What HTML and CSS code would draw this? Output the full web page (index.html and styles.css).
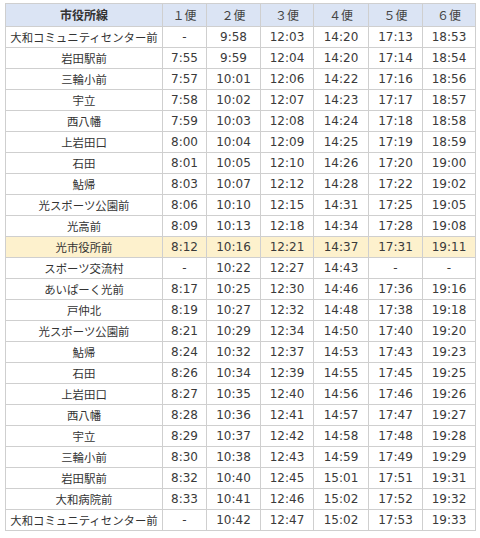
FILE: index.html
```html
<!DOCTYPE html>
<html lang="ja">
<head>
<meta charset="utf-8">
<link rel="stylesheet" href="styles.css">
</head>
<body>
<table class="timetable">
<colgroup>
<col class="c-stop"><col class="c1"><col class="c2"><col class="c3"><col class="c4"><col class="c5"><col class="c6">
</colgroup>
<thead>
<tr><th class="line">市役所線</th><th>１便</th><th>２便</th><th>３便</th><th>４便</th><th>５便</th><th>６便</th></tr>
</thead>
<tbody>
<tr><td class="stop">大和コミュニティセンター前</td><td>-</td><td>9:58</td><td>12:03</td><td>14:20</td><td>17:13</td><td>18:53</td></tr>
<tr><td class="stop">岩田駅前</td><td>7:55</td><td>9:59</td><td>12:04</td><td>14:20</td><td>17:14</td><td>18:54</td></tr>
<tr><td class="stop">三輪小前</td><td>7:57</td><td>10:01</td><td>12:06</td><td>14:22</td><td>17:16</td><td>18:56</td></tr>
<tr><td class="stop">宇立</td><td>7:58</td><td>10:02</td><td>12:07</td><td>14:23</td><td>17:17</td><td>18:57</td></tr>
<tr><td class="stop">西八幡</td><td>7:59</td><td>10:03</td><td>12:08</td><td>14:24</td><td>17:18</td><td>18:58</td></tr>
<tr><td class="stop">上岩田口</td><td>8:00</td><td>10:04</td><td>12:09</td><td>14:25</td><td>17:19</td><td>18:59</td></tr>
<tr><td class="stop">石田</td><td>8:01</td><td>10:05</td><td>12:10</td><td>14:26</td><td>17:20</td><td>19:00</td></tr>
<tr><td class="stop">鮎帰</td><td>8:03</td><td>10:07</td><td>12:12</td><td>14:28</td><td>17:22</td><td>19:02</td></tr>
<tr><td class="stop">光スポーツ公園前</td><td>8:06</td><td>10:10</td><td>12:15</td><td>14:31</td><td>17:25</td><td>19:05</td></tr>
<tr><td class="stop">光高前</td><td>8:09</td><td>10:13</td><td>12:18</td><td>14:34</td><td>17:28</td><td>19:08</td></tr>
<tr class="hl"><td class="stop">光市役所前</td><td>8:12</td><td>10:16</td><td>12:21</td><td>14:37</td><td>17:31</td><td>19:11</td></tr>
<tr><td class="stop">スポーツ交流村</td><td>-</td><td>10:22</td><td>12:27</td><td>14:43</td><td>-</td><td>-</td></tr>
<tr><td class="stop">あいぱーく光前</td><td>8:17</td><td>10:25</td><td>12:30</td><td>14:46</td><td>17:36</td><td>19:16</td></tr>
<tr><td class="stop">戸仲北</td><td>8:19</td><td>10:27</td><td>12:32</td><td>14:48</td><td>17:38</td><td>19:18</td></tr>
<tr><td class="stop">光スポーツ公園前</td><td>8:21</td><td>10:29</td><td>12:34</td><td>14:50</td><td>17:40</td><td>19:20</td></tr>
<tr><td class="stop">鮎帰</td><td>8:24</td><td>10:32</td><td>12:37</td><td>14:53</td><td>17:43</td><td>19:23</td></tr>
<tr><td class="stop">石田</td><td>8:26</td><td>10:34</td><td>12:39</td><td>14:55</td><td>17:45</td><td>19:25</td></tr>
<tr><td class="stop">上岩田口</td><td>8:27</td><td>10:35</td><td>12:40</td><td>14:56</td><td>17:46</td><td>19:26</td></tr>
<tr><td class="stop">西八幡</td><td>8:28</td><td>10:36</td><td>12:41</td><td>14:57</td><td>17:47</td><td>19:27</td></tr>
<tr><td class="stop">宇立</td><td>8:29</td><td>10:37</td><td>12:42</td><td>14:58</td><td>17:48</td><td>19:28</td></tr>
<tr><td class="stop">三輪小前</td><td>8:30</td><td>10:38</td><td>12:43</td><td>14:59</td><td>17:49</td><td>19:29</td></tr>
<tr><td class="stop">岩田駅前</td><td>8:32</td><td>10:40</td><td>12:45</td><td>15:01</td><td>17:51</td><td>19:31</td></tr>
<tr><td class="stop">大和病院前</td><td>8:33</td><td>10:41</td><td>12:46</td><td>15:02</td><td>17:52</td><td>19:32</td></tr>
<tr><td class="stop">大和コミュニティセンター前</td><td>-</td><td>10:42</td><td>12:47</td><td>15:02</td><td>17:53</td><td>19:33</td></tr>
</tbody>
</table>
</body>
</html>
```

FILE: styles.css
```css
html, body {
  margin: 0;
  padding: 0;
  background: #ffffff;
}
body {
  padding: 3px 5px;
}
.timetable {
  border-collapse: collapse;
  table-layout: fixed;
  width: 470px;
  font-family: "DejaVu Sans", "Noto Sans CJK JP", sans-serif;
  font-size: 12px;
  color: #3a3a3a;
}
.c-stop { width: 157px; }
.c1 { width: 44px; }
.c2 { width: 54px; }
.c3 { width: 53px; }
.c4 { width: 55px; }
.c5 { width: 54px; }
.c6 { width: 53px; }
.timetable th,
.timetable td {
  border: 1px solid #cfcfcf;
  padding: 0;
  text-align: center;
  white-space: nowrap;
  overflow: hidden;
}
.timetable th {
  background: #dbe4f4;
  line-height: 22px;
  font-weight: normal;
  font-family: "Noto Sans CJK JP", sans-serif;
  font-size: 12px;
  color: #444;
}
.timetable th.line {
  font-weight: bold;
  color: #333;
}
.timetable td {
  line-height: 20px;
}
.timetable td.stop {
  font-family: "Noto Sans CJK JP", sans-serif;
  font-size: 11.4px;
  color: #333;
}
.timetable tr.hl td {
  background: #fdf1cd;
}
```
